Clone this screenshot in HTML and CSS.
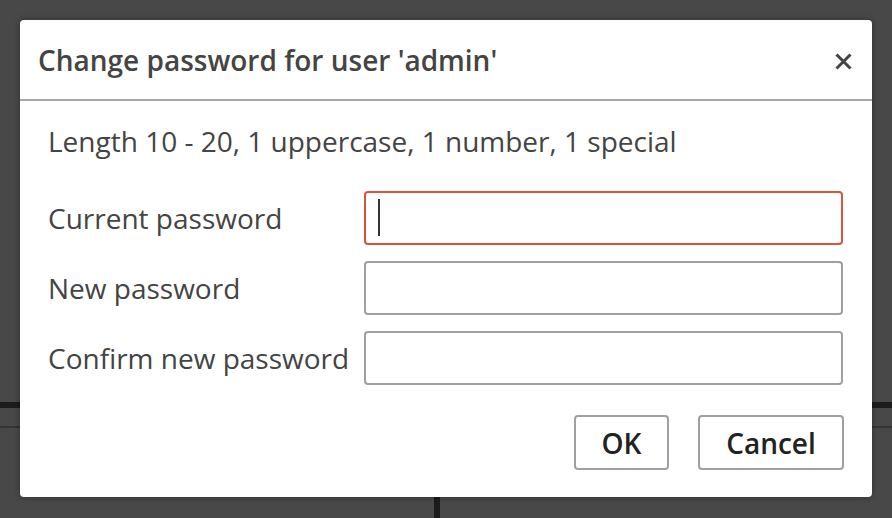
FILE: index.html
```html
<!DOCTYPE html>
<html lang="en">
<head>
<meta charset="utf-8">
<title>Change password</title>
<link rel="stylesheet" href="styles.css">
</head>
<body>
<div class="dialog">
  <div class="dialog-header">
    <h1 class="dialog-title">Change password for user 'admin'</h1>
    <button class="close-btn" aria-label="Close">
      <svg width="17" height="17" viewBox="0 0 17 17"><path d="M1.5 1.5L15.5 15.5M15.5 1.5L1.5 15.5" stroke="#444" stroke-width="3" stroke-linecap="butt" fill="none"/></svg>
    </button>
  </div>
  <div class="dialog-body">
    <p class="hint">Length 10 - 20, 1 uppercase, 1 number, 1 special</p>
    <div class="form-grid">
      <label class="field-label">Current password</label>
      <div class="input-wrap">
        <input class="field-input invalid" type="password">
        <span class="caret"></span>
      </div>
      <label class="field-label">New password</label>
      <div class="input-wrap"><input class="field-input" type="password"></div>
      <label class="field-label">Confirm new password</label>
      <div class="input-wrap"><input class="field-input" type="password"></div>
    </div>
    <div class="actions">
      <button class="btn btn-ok">OK</button>
      <button class="btn btn-cancel">Cancel</button>
    </div>
  </div>
</div>
</body>
</html>
```
FILE: styles.css
```css
html, body {
  margin: 0;
  padding: 0;
}
body {
  width: 892px;
  height: 518px;
  overflow: hidden;
  font-family: "Open Sans", "Noto Sans", sans-serif;
  background-color: #484848;
  background-image:
    linear-gradient(#1c1c1c, #1c1c1c),
    linear-gradient(#343434, #343434),
    linear-gradient(#1c1c1c, #1c1c1c);
  background-repeat: no-repeat;
  background-size: 892px 6px, 892px 2px, 6px 30px;
  background-position: 0 402px, 0 426px, 434px 497px;
  padding-top: 20px;
  box-sizing: border-box;
}
.dialog {
  margin-left: 20px;
  width: 852px;
  height: 477px;
  background: #fff;
  border-radius: 4px;
  box-shadow: 0 0 6px rgba(0,0,0,0.35);
  display: flex;
  flex-direction: column;
}
.dialog-header {
  height: 79px;
  border-bottom: 2px solid #a8a8a8;
  display: flex;
  align-items: center;
  justify-content: space-between;
  padding: 0 20px 0 18px;
}
.dialog-title {
  margin: 0;
  font-size: 28px;
  line-height: 38px;
  font-weight: 600;
  color: #444;
}
.close-btn {
  border: 0;
  background: none;
  padding: 0;
  margin-top: 3px;
  width: 17px;
  height: 17px;
  display: flex;
}
.dialog-body {
  padding: 0 28px;
  display: flex;
  flex-direction: column;
}
.hint {
  margin: 21px 0 0 0;
  font-size: 28px;
  line-height: 38px;
  color: #444;
}
.form-grid {
  margin-top: 31px;
  display: grid;
  grid-template-columns: 316px 479px;
  row-gap: 16px;
}
.field-label {
  font-size: 28px;
  color: #444;
  display: flex;
  align-items: center;
  height: 54px;
}
.input-wrap {
  position: relative;
  height: 54px;
}
.field-input {
  box-sizing: border-box;
  width: 100%;
  height: 54px;
  border: 2px solid #a0a0a0;
  border-radius: 4px;
  margin: 0;
  padding: 0 12px;
  background: #fff;
  outline: none;
}
.field-input.invalid {
  border-color: #d9533f;
}
.caret {
  position: absolute;
  left: 14px;
  top: 8px;
  width: 2px;
  height: 37px;
  background: #333;
}
.actions {
  margin-top: 30px;
  display: flex;
  justify-content: flex-end;
  gap: 29px;
}
.btn {
  box-sizing: border-box;
  height: 55px;
  border: 2px solid #a0a0a0;
  border-radius: 4px;
  background: #fff;
  font-family: "Open Sans", "Noto Sans", sans-serif;
  font-size: 28px;
  font-weight: 600;
  color: #222;
  padding: 0;
}
.btn-ok { width: 95px; }
.btn-cancel { width: 146px; }
```
